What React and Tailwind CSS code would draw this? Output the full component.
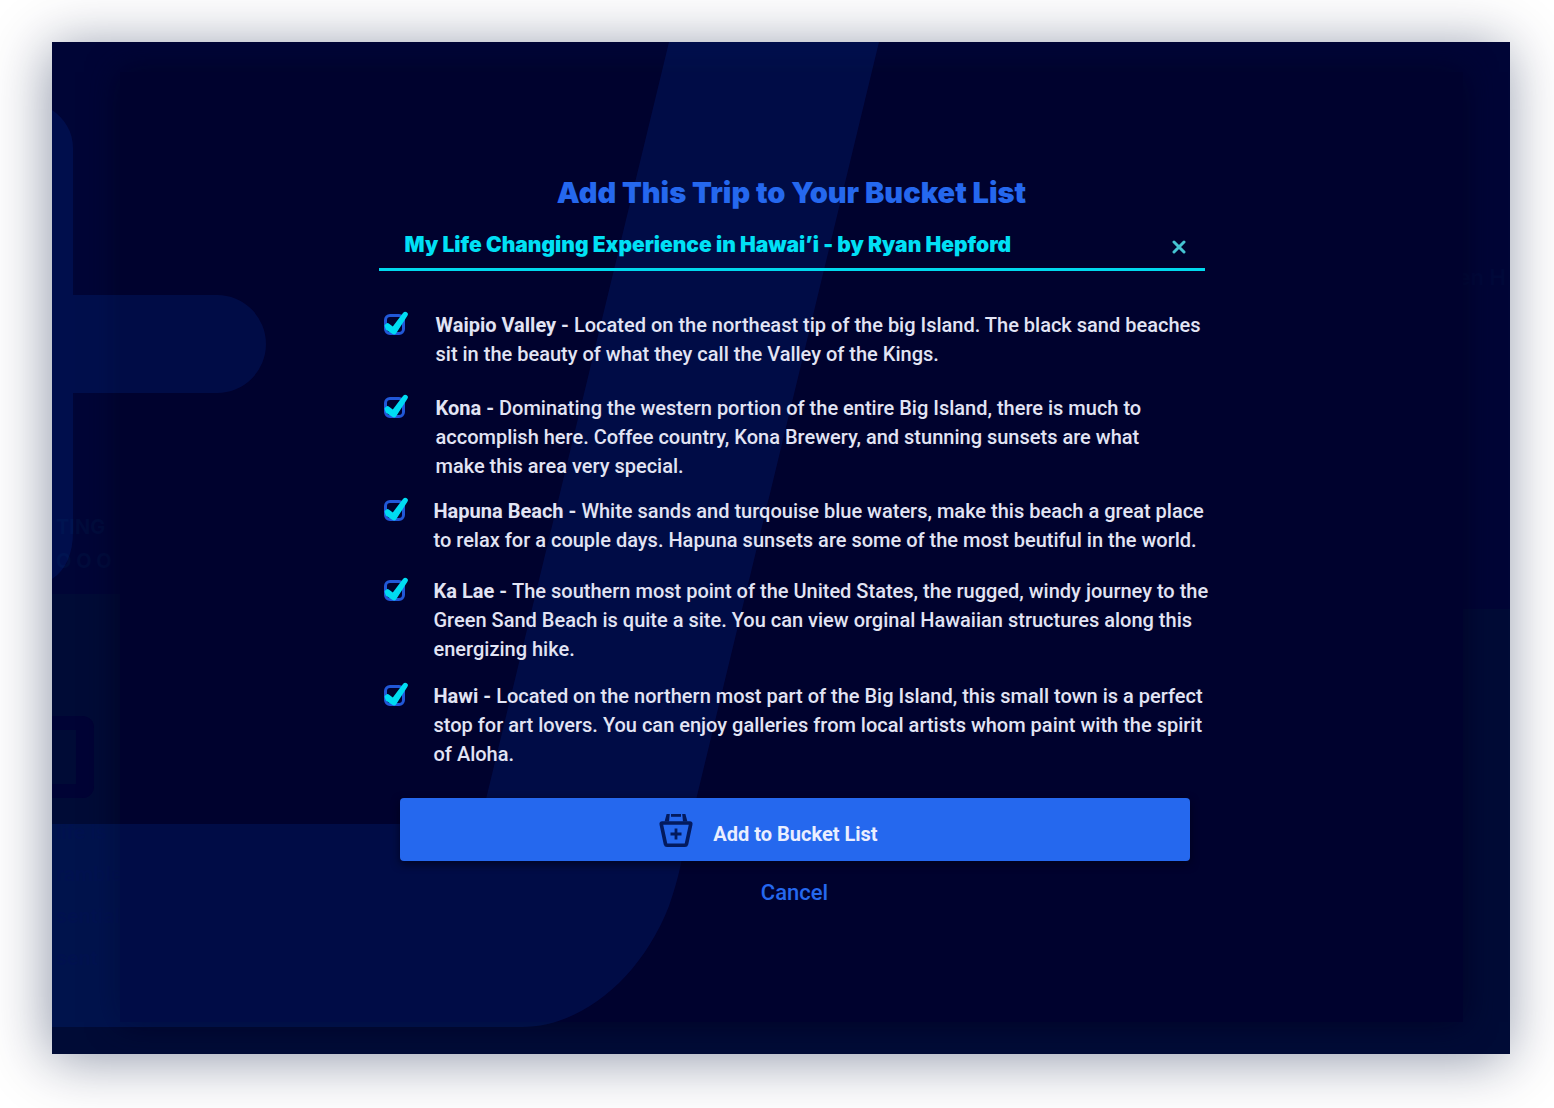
import React from "react";

const stops = [
  {
    id: "waipio",
    name: "Waipio Valley",
    row: "mb-[25px] gap-[31px]",
    lines: [
      "Located on the northeast tip of the big Island. The black sand beaches",
      "sit in the beauty of what they call the Valley of the Kings.",
    ],
  },
  {
    id: "kona",
    name: "Kona",
    row: "mb-4 gap-[31px]",
    lines: [
      "Dominating the western portion of the entire Big Island, there is much to",
      "accomplish here. Coffee country, Kona Brewery, and stunning sunsets are what",
      "make this area very special.",
    ],
  },
  {
    id: "hapuna",
    name: "Hapuna Beach",
    row: "mb-[22px] gap-[29px]",
    lines: [
      "White sands and turqouise blue waters, make this beach a great place",
      "to relax for a couple days. Hapuna sunsets are some of the most beutiful in the world.",
    ],
  },
  {
    id: "kalae",
    name: "Ka Lae",
    row: "mb-[18px] gap-[29px]",
    lines: [
      "The southern most point of the United States, the rugged, windy journey to the",
      "Green Sand Beach is quite a site. You can view orginal Hawaiian structures along this",
      "energizing hike.",
    ],
  },
  {
    id: "hawi",
    name: "Hawi",
    row: "gap-[29px]",
    lines: [
      "Located on the northern most part of the Big Island, this small town is a perfect",
      "stop for art lovers. You can enjoy galleries from local artists whom paint with the spirit",
      "of Aloha.",
    ],
  },
];

function Tick() {
  return (
    <svg viewBox="1 0 26 24" aria-hidden="true" className="pointer-events-none absolute bottom-0 left-0 h-6 w-[26px] max-w-none">
      <path d="M1.8 15.4 Q1.2 14.2 2.2 13.4 L3.8 12.2 Q4.8 11.6 5.8 12.4 L9.8 15.4 L20 2 Q21.6 0 23.8 1.2 Q25.8 2.6 24.4 4.8 L13.2 22.2 Q11.6 24.2 9.2 22.8 L2.8 18.4 Z" fill="#00dcf2" />
    </svg>
  );
}

function Stop({ stop }) {
  return (
    <li className={`flex items-start ${stop.row}`}>
      <span className="relative mt-[3px] block size-[21px] shrink-0">
        <input
          id={stop.id}
          type="checkbox"
          defaultChecked
          className="block size-[21px] appearance-none rounded-md border-3 border-[#2158d8] bg-transparent"
        />
        <Tick />
      </span>
      <label htmlFor={stop.id} className="whitespace-nowrap">
        <strong className="font-bold">{stop.name} - </strong>
        {stop.lines.map((line, i) => (
          <React.Fragment key={line}>
            {i > 0 && <br />}
            {line}
          </React.Fragment>
        ))}
      </label>
    </li>
  );
}

function BucketIcon() {
  return (
    <svg viewBox="0 0 34 34" fill="none" stroke="#031a5e" aria-hidden="true" className="size-[34px]">
      <path d="M3.2 10 H30.8 Q32 10 31.7 11.3 L27.5 31 Q27.2 32.2 26 32.2 H8 Q6.8 32.2 6.5 31 L2.3 11.3 Q2 10 3.2 10 Z" strokeWidth="3.6" strokeLinejoin="round" />
      <path d="M5.6 8.6 L7.6 1 H10.8 L10 8.6 Z M24 8.6 L23.2 1 H26.4 L28.4 8.6 Z" fill="#031a5e" stroke="none" />
      <path d="M12 2.4 H22" strokeWidth="2.8" />
      <path d="M17 15.5 V26.5 M11.5 21 H22.5" strokeWidth="2.8" />
    </svg>
  );
}

function Backdrop() {
  return (
    <div aria-hidden="true" className="absolute inset-0 flex justify-between font-['Inter',sans-serif] text-xl font-semibold text-[#00093a]">
      <div className="flex w-1/2 flex-col justify-end">
        <div className="pb-4 pl-1 leading-[34px] font-bold text-[#000c3c]">
          TING
          <br />O O O
        </div>
        <div className="h-[460px] bg-[#000b36] pt-[122px]">
          <div className="h-[82px] w-[42px] rounded-r-xl border-y-14 border-r-18 border-[#000335]" />
          <div className="pt-[13px] pl-1 leading-[42px]">
            life is
            <br />
            ramble
            <br />
            sential
            <br />
            sent
          </div>
        </div>
      </div>
      <div className="flex w-1/2 flex-col items-end justify-end">
        <div className="mb-[316px] pr-1 text-[22px] leading-8">en H</div>
        <div className="h-[445px] w-full bg-[#000b36]" />
      </div>
    </div>
  );
}

function Watermark() {
  return (
    <svg viewBox="52 42 1458 1012" preserveAspectRatio="xMinYMin slice" aria-hidden="true" className="absolute inset-0 size-full">
      <g fill="#002a90" fillOpacity="0.25">
        <path d="M52 110 C65 119 73 132 73 148 V295 H217 A49 49 0 0 1 217 393 H73 V532 C73 553 66 570 52 579 Z" />
        <path d="M669 42 H879 L682 858 C680 870 675 889 669 906 C640 980 580 1027 522 1027 H52 V824 H480 Z" />
      </g>
    </svg>
  );
}

export default function App() {
  return (
    <div className="min-h-screen bg-white pt-[42px] pr-11 pb-[54px] pl-[52px]">
      <main className="relative overflow-hidden bg-[#000536] pt-[30px] pr-[47px] pb-[32px] pl-[68px] shadow-[-3px_5px_54px_rgba(0,18,60,0.44)]">
        <Backdrop />
        <section
          role="dialog"
          aria-labelledby="title"
          className="relative flex min-h-[950px] flex-col items-center bg-[#00022e] pt-[101px] shadow-[0_0_30px_0_#000326]"
        >
          <div aria-hidden="true" className="absolute -top-[30px] -right-[47px] -bottom-[32px] -left-[68px]">
            <Watermark />
          </div>
          <div className="relative w-[826px]">
            <h1 id="title" className="text-center font-['Inter',sans-serif] text-[29px] leading-10 font-black text-[#2568ee]">
              Add This Trip to Your Bucket List
            </h1>
            <div className="mt-3 flex h-[46px] items-center justify-between border-b-3 border-[#00d9ee] pr-[19px] pb-[3px] pl-[26px]">
              <h2 className="font-['Inter',sans-serif] text-[21px] leading-8 font-black whitespace-nowrap text-[#00e0f5]">
                My Life Changing Experience in Hawai’i - by Ryan Hepford
              </h2>
              <button type="button" aria-label="Close" className="mt-1 text-[#45c4d2]">
                <svg viewBox="0 0 14 14" className="size-3.5" fill="none" stroke="currentColor" strokeWidth="3" strokeLinecap="round">
                  <path d="M2 2 L12 12 M12 2 L2 12" />
                </svg>
              </button>
            </div>
            <ul className="mt-10 pl-[5px] font-['Roboto',sans-serif] text-[20px] leading-[29px] font-medium text-[#e2e4f4]">
              {stops.map((stop) => (
                <Stop key={stop.id} stop={stop} />
              ))}
            </ul>
            <div className="mt-[29px] flex flex-col items-center pr-[15px] pl-[21px] font-['Roboto',sans-serif]">
              <button
                type="button"
                className="flex h-[63px] w-full items-center justify-center gap-5 rounded-sm bg-[#2568ee] pr-[52px] text-[20px] font-bold text-[#eaeeff] shadow-[0_3px_8px_rgba(0,0,20,0.7)]"
              >
                <BucketIcon />
                <span className="pt-2">Add to Bucket List</span>
              </button>
              <button type="button" className="mt-4 text-[22px] leading-8 font-medium text-[#2568ee]">
                Cancel
              </button>
            </div>
          </div>
        </section>
      </main>
    </div>
  );
}
